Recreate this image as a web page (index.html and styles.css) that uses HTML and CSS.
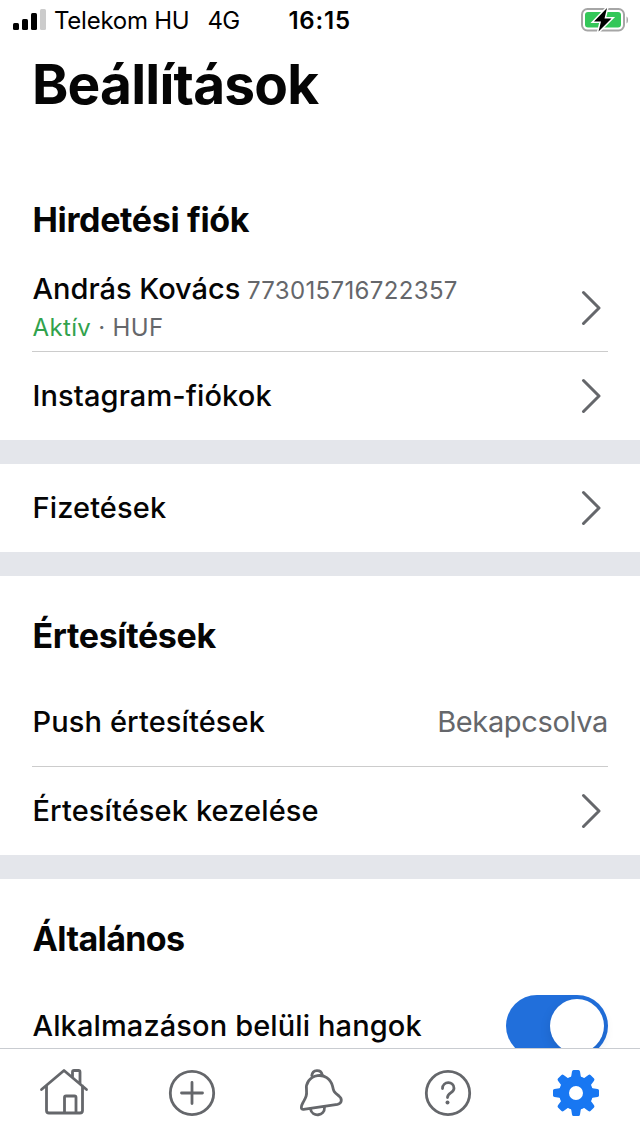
FILE: index.html
```
<!DOCTYPE html>
<html lang="hu">
<head>
    <meta charset="UTF-8">
    <meta name="viewport" content="width=device-width, initial-scale=1.0">
    <title>Beállítások</title>
    <link rel="stylesheet" href="styles.css">
</head>
<body>

<div class="app">
    <header class="status-bar">
        <svg class="signal" width="34" height="22" viewBox="0 0 34 22">
            <rect x="0" y="14" width="6" height="7" rx="1.5"/>
            <rect x="9" y="10" width="6" height="11" rx="1.5"/>
            <rect x="18" y="4" width="6" height="17" rx="1.5"/>
            <rect class="weak" x="27" y="0" width="6" height="21" rx="1.5"/>
        </svg>
        <span class="carrier">Telekom HU</span>
        <span class="network">4G</span>
        <span class="time">16:15</span>
        <svg class="battery" width="48" height="26" viewBox="0 0 48 26">
            <rect class="case" x="2" y="2" width="42" height="21.500" rx="5.5"/>
            <path class="tip" d="M46.500 9.500c2 .8 2 6.200 0 7z"/>
            <rect class="level" x="5" y="5" width="36" height="15.500" rx="3"/>
            <path class="bolt" d="M27 1L14 14.500h7l-2.500 10L31.500 11.500h-7z"/>
        </svg>
    </header>

    <main class="content">
        <h1>Beállítások</h1>

        <section>
            <h2 class="account-title">Hirdetési fiók</h2>
            <div class="row account-row">
                <div class="account">
                    <div class="account-name"><span class="label name">András Kovács</span> <span class="account-id">773015716722357</span></div>
                    <div class="account-info"><span class="active">Aktív</span> · HUF</div>
                </div>
                <svg class="chevron" width="20" height="36" viewBox="0 0 20 36"><path d="M2.500 2.500L18 18L2.500 33.500"/></svg>
            </div>
            <div class="row">
                <span class="label">Instagram-fiókok</span>
                <svg class="chevron" width="20" height="36" viewBox="0 0 20 36"><path d="M2.500 2.500L18 18L2.500 33.500"/></svg>
            </div>
        </section>

        <section>
            <div class="row">
                <span class="label">Fizetések</span>
                <svg class="chevron" width="20" height="36" viewBox="0 0 20 36"><path d="M2.500 2.500L18 18L2.500 33.500"/></svg>
            </div>
        </section>

        <section>
            <h2>Értesítések</h2>
            <div class="row">
                <span class="label">Push értesítések</span>
                <span class="value">Bekapcsolva</span>
            </div>
            <div class="row">
                <span class="label">Értesítések kezelése</span>
                <svg class="chevron" width="20" height="36" viewBox="0 0 20 36"><path d="M2.500 2.500L18 18L2.500 33.500"/></svg>
            </div>
        </section>

        <section>
            <h2 class="general-title">Általános</h2>
            <div class="row">
                <span class="label">Alkalmazáson belüli hangok</span>
                <div class="toggle"><div class="knob"></div></div>
            </div>
        </section>
    </main>

    <nav class="tab-bar">
        <a class="tab">
            <svg width="52" height="52" viewBox="0 0 52 52">
                <path d="M3.500 22.500L26 3.500L48.500 22.500M8.500 19v24.500q0 2.500 2.500 2.500h31q2.500 0 2.500-2.500V19M34.500 10V5q0-1.500 1.500-1.500h4.500q1.500 0 1.500 1.500v12M26.500 45.500V30.500q0-1.500 1.500-1.500h8.500q1.500 0 1.500 1.500v15"/>
            </svg>
        </a>
        <a class="tab">
            <svg width="52" height="52" viewBox="0 0 52 52">
                <circle cx="26" cy="26" r="21.700"/>
                <path d="M15.500 26h21M26 15.500v21"/>
            </svg>
        </a>
        <a class="tab">
            <svg width="52" height="52" viewBox="0 0 52 52">
                <path d="M9.500 42.300L43.500 37.300C48 36.500 48.500 31.800 45 29C39.500 25 39.500 24 38.500 19C36.500 11.500 30 7.600 23.500 8.700C15.500 10 11.500 16.500 12.500 23C13 29 11.800 30.500 9 35.500C6.800 39.500 6.600 42.600 9.500 42.300z"/>
                <path d="M17.800 8.700C18.500 2 27 2 28.200 7.700M16.500 42c1.500 8.500 14.500 7.500 14-2"/>
            </svg>
        </a>
        <a class="tab">
            <svg width="52" height="52" viewBox="0 0 52 52">
                <circle cx="26" cy="26" r="21.700"/>
                <path d="M20.500 21.500c0-7.500 11.500-7.800 11.500-.3c0 5-6.500 4.500-6.500 9.300"/>
                <circle class="dot" cx="25.500" cy="35.500" r="2"/>
            </svg>
        </a>
        <a class="tab selected">
            <svg width="52" height="52" viewBox="-26 -26 52 52">
                <defs>
                    <path id="tooth" d="M-6.500-14L-4.800-16.500L-4-21.500Q-3.700-23-2.500-23H2.500Q3.700-23 4-21.500L4.800-16.500L6.500-14z"/>
                </defs>
                <circle class="ring" r="12"/>
                <use href="#tooth"/>
                <use href="#tooth" transform="rotate(45)"/>
                <use href="#tooth" transform="rotate(90)"/>
                <use href="#tooth" transform="rotate(135)"/>
                <use href="#tooth" transform="rotate(180)"/>
                <use href="#tooth" transform="rotate(225)"/>
                <use href="#tooth" transform="rotate(270)"/>
                <use href="#tooth" transform="rotate(315)"/>
            </svg>
        </a>
    </nav>
</div>

</body>
</html>
```

FILE: styles.css
```
* {
    box-sizing: border-box;
}

body {
    margin: 0;
    font-family: Inter, "Liberation Sans", sans-serif;
    background-color: white;
    color: #050505;
}

.app {
    display: flex;
    flex-direction: column;
    height: 1136px;
    overflow: hidden;
}

.status-bar {
    display: flex;
    align-items: center;
    flex: none;
    height: 40px;
    padding: 0 12px 0 13px;
    font-size: 24px;
    line-height: 40px;
    color: black;
}

.status-bar span {
    padding-top: 2px;
}

.signal .weak {
    fill: #ccc;
}

.carrier {
    margin-left: 7px;
    letter-spacing: -0.25px;
}

.network {
    margin-left: 18px;
    letter-spacing: -0.7px;
}

.time {
    margin-left: 49px;
    font-weight: 600;
    letter-spacing: 0.8px;
}

.battery {
    margin-left: auto;
}

.case {
    fill: none;
    stroke: #a6a6a6;
    stroke-width: 2;
}

.tip {
    fill: #a6a6a6;
}

.level {
    fill: #34c759;
}

.bolt {
    stroke: white;
    stroke-width: 3;
    paint-order: stroke;
}

.content {
    flex: 1;
    min-height: 0;
    overflow: hidden;
}

h1 {
    margin: 0;
    padding-left: 32px;
    height: 136px;
    font-size: 55px;
    line-height: 88px;
    letter-spacing: -0.8px;
}

section {
    padding: 0 32px;
}

section + section {
    border-top: 24px solid #e4e6eb;
}

h2 {
    margin: 0;
    padding-left: 0.5px;
    height: 102px;
    font-size: 34px;
    line-height: 120px;
    letter-spacing: -0.35px;
}

h2.account-title {
    height: 88px;
    line-height: 88px;
}

h2.general-title {
    height: 103px;
    letter-spacing: -0.6px;
}

.row {
    display: flex;
    align-items: center;
    justify-content: space-between;
    height: 88px;
}

.row + .row {
    height: 89px;
    border-top: 1px solid #ccc;
}

.row.account-row {
    height: 87px;
}

.label {
    padding: 0 0 2px 0.5px;
    font-size: 29px;
    font-weight: 500;
    letter-spacing: 0.12px;
}

.label.name {
    letter-spacing: 0;
}

.account-id,
.account-info {
    font-size: 24px;
    letter-spacing: 0.35px;
    color: #65676b;
}

.account-id {
    margin-left: 2px;
}

.account-name {
    line-height: 40px;
}

.account-info {
    height: 34px;
    padding-left: 0.5px;
    line-height: 30px;
}

.active {
    color: #31a24c;
}

.value {
    padding-bottom: 2px;
    font-size: 29px;
    letter-spacing: -0.35px;
    color: #65676b;
}

.chevron {
    margin-right: 7px;
    fill: none;
    stroke: #65676b;
    stroke-width: 3;
    stroke-linecap: round;
    stroke-linejoin: round;
}

.toggle {
    display: flex;
    justify-content: flex-end;
    width: 102px;
    height: 62px;
    padding: 4px;
    border-radius: 31px;
    background-color: #216fdb;
}

.knob {
    width: 54px;
    height: 54px;
    border-radius: 50%;
    background-color: white;
    box-shadow: 0 4px 12px rgba(0, 0, 0, 0.1);
}

.tab-bar {
    display: flex;
    flex: none;
    height: 88px;
    border-top: 1px solid #c9ccd1;
    background-color: white;
}

.tab {
    display: flex;
    flex: 1;
    align-items: center;
    justify-content: center;
}

.tab svg {
    fill: none;
    stroke: #65676b;
    stroke-width: 2.8;
    stroke-linecap: round;
    stroke-linejoin: round;
}

.tab .dot {
    fill: #65676b;
    stroke: none;
}

.selected svg {
    fill: #1877f2;
    stroke: none;
}

.selected .ring {
    fill: none;
    stroke: #1877f2;
    stroke-width: 10;
}
```
